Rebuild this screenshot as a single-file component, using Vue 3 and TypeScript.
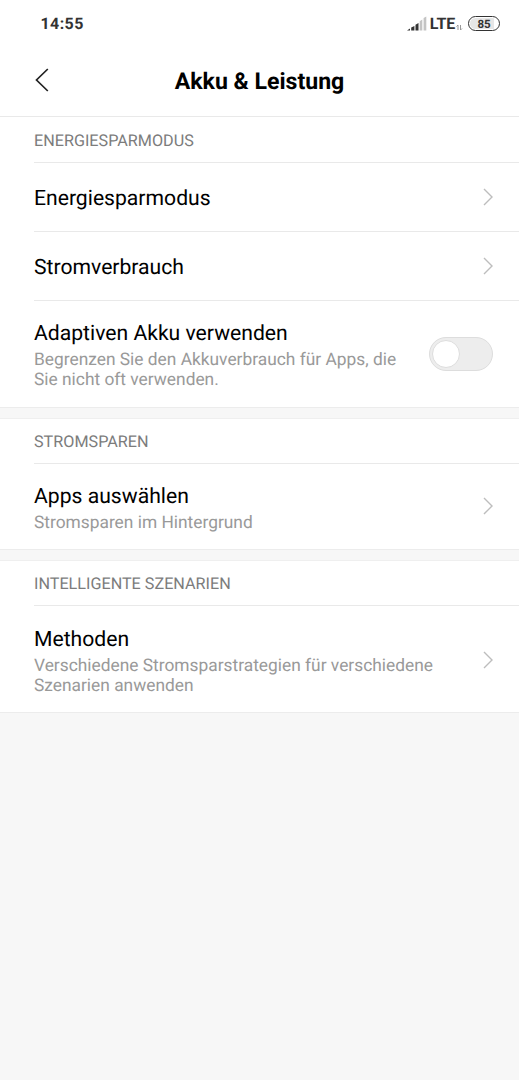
<script setup lang="ts">
interface Row {
  title: string
  lines?: string[]
  toggle?: boolean
}
interface Section {
  heading: string
  rows: Row[]
}

const sections: Section[] = [
  {
    heading: 'ENERGIESPARMODUS',
    rows: [
      { title: 'Energiesparmodus' },
      { title: 'Stromverbrauch' },
      {
        title: 'Adaptiven Akku verwenden',
        lines: ['Begrenzen Sie den Akkuverbrauch für Apps, die', 'Sie nicht oft verwenden.'],
        toggle: true,
      },
    ],
  },
  {
    heading: 'STROMSPAREN',
    rows: [{ title: 'Apps auswählen', lines: ['Stromsparen im Hintergrund'] }],
  },
  {
    heading: 'INTELLIGENTE SZENARIEN',
    rows: [
      {
        title: 'Methoden',
        lines: ['Verschiedene Stromsparstrategien für verschiedene', 'Szenarien anwenden'],
      },
    ],
  },
]
</script>

<template>
  <div class="screen">
    <div class="status">
      <span class="time">14:55</span>
      <div class="indicators">
        <svg class="signal" width="20" height="15" viewBox="0 0 20 15">
          <path d="M0 14.5 3 12.6V14.5ZM4.2 11.5 7.4 10V14.5H4.2ZM8.5 8.7 11.5 7V14.5H8.5Z" fill="#333" />
          <path d="M12.7 5.3 15.3 3.6V14.5H12.7ZM16.6 2 19.3 .5V14.5H16.6Z" fill="#c4c4c4" />
        </svg>
        <span class="lte">LTE</span>
        <svg class="data" width="7" height="7" viewBox="0 0 7 7" fill="none" stroke="#999" stroke-width="1">
          <path d="M.5 2.5 2 1V6M4.5 1V6L6 4.5" />
        </svg>
        <span class="battery"><span class="charge">85</span></span>
      </div>
    </div>
    <header class="bar">
      <svg class="back" width="16" height="26" viewBox="0 0 16 26" fill="none" stroke="#222" stroke-width="1.7">
        <path d="M13.8 2 2.5 13 13.8 24" />
      </svg>
      <h1>Akku &amp; Leistung</h1>
    </header>
    <section v-for="section in sections" :key="section.heading" class="group">
      <h2>{{ section.heading }}</h2>
      <div
        v-for="row in section.rows"
        :key="row.title"
        class="row"
        :class="{ detailed: row.lines, tall: row.lines?.length === 2, switchable: row.toggle }"
      >
        <div class="copy">
          <div class="title">{{ row.title }}</div>
          <div v-for="line in row.lines" :key="line" class="line">{{ line }}</div>
        </div>
        <span v-if="row.toggle" class="switch"><span class="knob"></span></span>
        <svg v-else class="chevron" width="12" height="18" viewBox="0 0 12 18" fill="none" stroke="#bdbdbd" stroke-width="1.4">
          <path d="M2 1 10 9 2 17" />
        </svg>
      </div>
    </section>
  </div>
</template>

<style>
body {
  margin: 0;
  background: #f7f7f7;
}
</style>

<style scoped>
.screen {
  box-sizing: border-box;
  width: 519px;
  height: 1080px;
  overflow: hidden;
  background: #f7f7f7;
  font-family: Roboto, "Liberation Sans", sans-serif;
  color: #000;
  text-rendering: geometricPrecision;
}
.status {
  box-sizing: border-box;
  display: flex;
  align-items: center;
  justify-content: space-between;
  height: 46px;
  padding: 0 19px 0 40.5px;
  background: #fff;
  color: #333;
}
.time {
  font-size: 16px;
  font-weight: 700;
  letter-spacing: 0.4px;
}
.indicators {
  display: flex;
  align-items: center;
}
.signal {
  margin-left: -1px;
}
.lte {
  margin: 1px 0 0 3px;
  font-size: 16px;
  font-weight: 700;
  line-height: 20px;
  letter-spacing: -0.2px;
}
.data {
  margin: 8px 5px 0 1px;
}
.battery {
  box-sizing: border-box;
  display: flex;
  width: 32px;
  height: 15px;
  padding: 1px;
  border: 1.5px solid #333;
  border-radius: 8px;
}
.charge {
  flex: 1;
  border-radius: 6px;
  background: linear-gradient(90deg, #e6e6e6 85%, #fff 85%);
  font-size: 11.5px;
  font-weight: 700;
  line-height: 12px;
  text-align: center;
}
.bar {
  box-sizing: border-box;
  display: grid;
  grid-template-columns: 34px 1fr 34px;
  align-items: center;
  height: 71px;
  border-bottom: 1px solid #e9e9e9;
  background: #fff;
}
.back {
  margin: 0 0 2px 34px;
}
h1 {
  margin: 2px 0 0;
  font-size: 23.1px;
  font-weight: 700;
  line-height: 28px;
  text-align: center;
}
.group {
  border-bottom: 1px solid #ececec;
  background: #fff;
}
.group + .group {
  margin-top: 10px;
  border-top: 1px solid #efefef;
}
h2 {
  box-sizing: border-box;
  height: 45px;
  margin: 0 0 0 34px;
  border-bottom: 1px solid #e9e9e9;
  color: #7c7c7c;
  font-size: 16.2px;
  font-weight: 400;
  line-height: 45px;
}
.group:first-of-type h2 {
  height: 46px;
  line-height: 47px;
}
.row {
  box-sizing: border-box;
  display: flex;
  align-items: center;
  justify-content: space-between;
  height: 69px;
  margin-left: 34px;
  padding: 2px 26px 0 0;
  border-bottom: 1px solid #e9e9e9;
}
.row:last-child {
  border-bottom: 0;
}
.detailed {
  height: 85px;
  padding-top: 1px;
}
.tall {
  height: 106px;
  padding-top: 2px;
}
.switchable {
  padding-top: 0;
}
.copy {
  padding-top: 2px;
}
.title {
  font-size: 21.15px;
  line-height: 28px;
}
.line {
  color: #999;
  font-size: 17.35px;
  line-height: 20px;
  white-space: nowrap;
}
.detailed .title {
  margin-bottom: 2px;
}
.switch {
  box-sizing: border-box;
  width: 64px;
  height: 34px;
  padding: 2px;
  border: 1px solid #ddd;
  border-radius: 17px;
  background: #ededed;
}
.knob {
  box-sizing: border-box;
  display: block;
  width: 28px;
  height: 28px;
  border: 1px solid #ddd;
  border-radius: 50%;
  background: #fff;
}
.chevron {
  margin: 0 -1px 0 0;
}
.row:not(.tall) .chevron {
  margin-bottom: 2px;
}
</style>
